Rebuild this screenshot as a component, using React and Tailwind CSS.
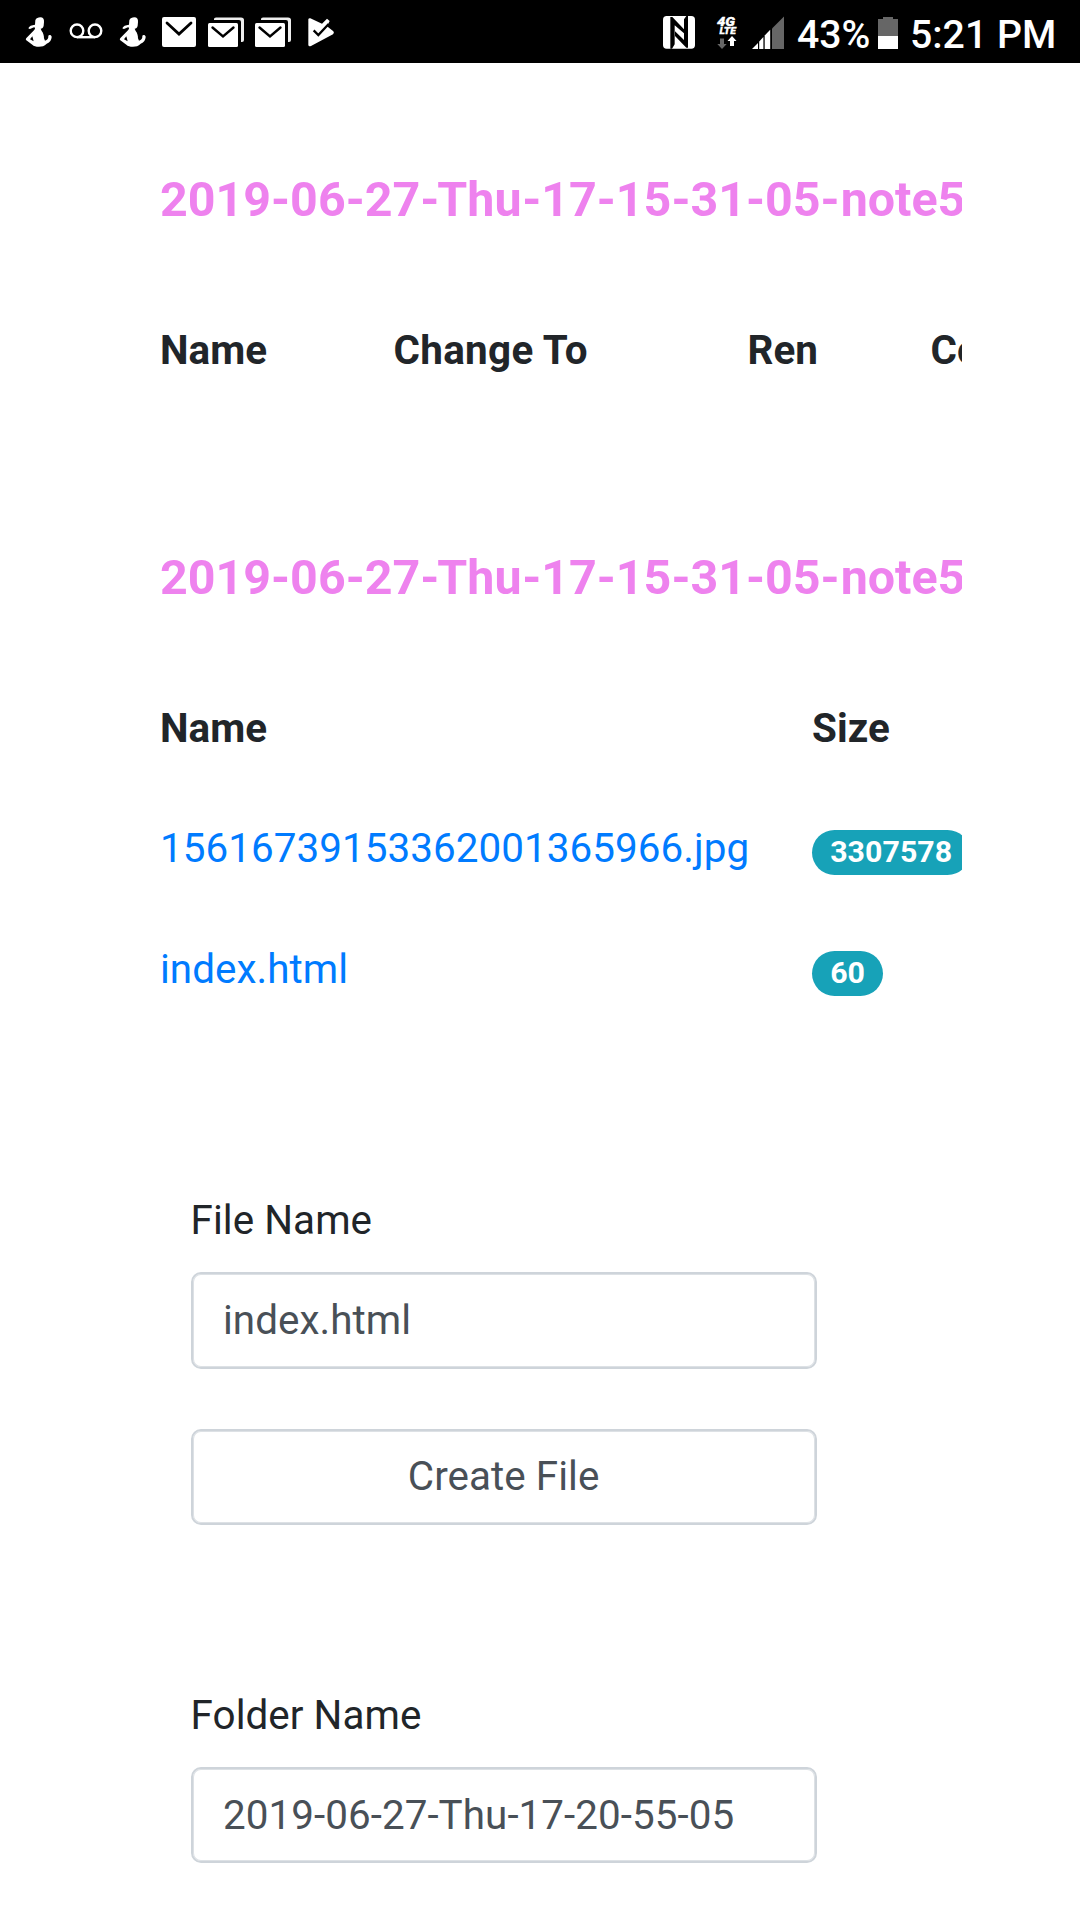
function PersonIcon() {
  return (
    <svg className="h-[30px] w-[28px]" viewBox="0 0 84 90" fill="white">
      <path d="M31 10C33 3 40 1 46 1C54 1 58 7 57 15L56 26C55 32 51 34 47 35L50 42C55 48 57 56 57 64L60 71C67 69 71 63 70 56C73 52 79 54 80 59C80 69 73 77 65 80C58 87 51 89 42 89C33 89 26 87 22 83L3 69C2 66 3 64 5 62L27 40C31 36 31 33 28 31C23 31 17 39 10 34C12 27 20 24 30 23Z" />
      <path d="M15 67L22 58L26 73Z" fill="black" />
    </svg>
  );
}

function VoicemailIcon() {
  return (
    <svg className="h-[18px] w-[34px]" viewBox="0 0 34 18" fill="none" stroke="white" strokeWidth="2.4">
      <circle cx="8" cy="7.8" r="6.3" />
      <circle cx="26" cy="7.8" r="6.3" />
      <path d="M8 14.2H26" />
    </svg>
  );
}

function MailIcon() {
  return (
    <svg className="h-[30px] w-[34px]" viewBox="0 0 34 30">
      <rect width="34" height="30" rx="2" fill="white" />
      <path d="M5 6L17 17L29 6" fill="none" stroke="black" strokeWidth="2.8" strokeLinecap="round" />
    </svg>
  );
}

function MailStackIcon() {
  return (
    <svg className="h-[30px] w-[36px]" viewBox="0 0 36 30">
      <path d="M6 3V2Q6 .5 8 .5H33Q36 .5 36 3V23Q36 25 34 25H33V5Q33 3 31 3Z" fill="#eeeeee" />
      <rect y="6" width="30" height="24" rx="1.5" fill="white" />
      <path d="M4.5 10.5L15 19.5L25.5 10.5" fill="none" stroke="black" strokeWidth="2.4" strokeLinecap="round" />
    </svg>
  );
}

function PlayCheckIcon() {
  return (
    <svg className="h-[30px] w-[28px]" viewBox="0 0 84 90">
      <path d="M4 7Q5 3 10 4L45 20L60 5L68 12L60 28L79 43Q83 48 78 52L12 87Q5 90 4 84Z" fill="white" />
      <path d="M20 40L34 54L65 21" fill="none" stroke="black" strokeWidth="7" />
    </svg>
  );
}

function NfcIcon() {
  return (
    <svg className="h-[33px] w-[32px]" viewBox="0 0 96 99">
      <rect width="96" height="98" rx="11" fill="white" />
      <path d="M22 3H28L63 40V52L35 28V85L27 98H22Z" />
      <path d="M75 95H70L36 60V46L63 72V10L70 0H75Z" />
    </svg>
  );
}

function NetworkIcon() {
  return (
    <svg className="h-[33px] w-[20px] overflow-visible" viewBox="0 0 20 33" fill="white">
      <g fontFamily="Roboto, sans-serif" fontWeight="900" fontStyle="italic" stroke="white" strokeWidth="0.3">
        <text x="0" y="9.8" fontSize="12.5" textLength="18" lengthAdjust="spacingAndGlyphs">4G</text>
        <text x="2.4" y="18.2" fontSize="9.8" textLength="16.5" lengthAdjust="spacingAndGlyphs">LTE</text>
      </g>
      <path d="M3 22.5H7V28H9.7L5 33L0.3 28H3Z" fill="#666" />
      <path d="M15 20L19.5 25H17V30H13V25H10.5Z" />
    </svg>
  );
}

function SignalIcon() {
  return (
    <svg className="h-[33px] w-[32px]" viewBox="0 0 32 33" fill="white">
      <path d="M0 33L6 27V33Z" />
      <path d="M7.2 25.5L11.4 21V33H7.2Z" />
      <path d="M12.7 19.5L18.2 13.7V33H12.7Z" />
      <path d="M20 12.5L32 0.5V33H20Z" fill="#666" />
    </svg>
  );
}

function BatteryIcon() {
  return (
    <svg className="h-[32px] w-[20px]" viewBox="0 0 20 32">
      <path d="M5 0H15V2H20V19H0V2H5Z" fill="#666" />
      <path d="M0 19H20V32H0Z" fill="white" />
    </svg>
  );
}

function StatusBar() {
  return (
    <header className="flex h-[63px] shrink-0 items-start bg-black text-[39.2px] leading-[46px] font-medium tracking-normal text-white">
      <div className="flex items-start pt-[17px] pl-[25px]">
        <PersonIcon />
        <span className="pt-[6px] pl-[16px]"><VoicemailIcon /></span>
        <span className="pl-[16px]"><PersonIcon /></span>
        <span className="pl-[15px]"><MailIcon /></span>
        <span className="pl-[12px]"><MailStackIcon /></span>
        <span className="pl-[11px]"><MailStackIcon /></span>
        <span className="pl-[16px]"><PlayCheckIcon /></span>
      </div>
      <div className="ml-auto flex w-[417px] items-start pt-[16px]">
        <NfcIcon />
        <span className="ml-[22px]"><NetworkIcon /></span>
        <span className="ml-[15px]"><SignalIcon /></span>
        <span className="-mt-[4px] ml-[13px] w-[81px] whitespace-nowrap">43%</span>
        <span className="pt-px"><BatteryIcon /></span>
        <span className="-mt-[4px] ml-[12px] whitespace-nowrap">5:21 PM</span>
      </div>
    </header>
  );
}

function Title() {
  return (
    <h2 className="h-[72px] text-[48.4px] leading-[72px] font-bold tracking-normal whitespace-nowrap text-[#ee82ee]">
      2019-06-27-<span className="-ml-[2px]">Thu</span>
      <span className="ml-[0.7px]">-17-15-31-05-</span>
      <span className="ml-[1px]">note5</span>
    </h2>
  );
}

function FileRow({ name, size }) {
  return (
    <div className="flex h-[121px] items-center">
      <a className="w-[652px] shrink-0 text-[#007bff]">{name}</a>
      <span className="mt-[7px] flex h-[45px] shrink-0 items-center rounded-full bg-[#17a2b8] px-[18.2px] text-[30.3px] leading-none font-bold text-white">
        {size}
      </span>
    </div>
  );
}

const boxClass =
  "block w-full rounded-[10px] border-2 border-[#ced4da] bg-white text-[#495057] shadow-[inset_0_0_0_1px_#dde1e5] outline-none";

export default function App() {
  return (
    <div className="flex h-[1920px] w-[1080px] flex-col overflow-hidden bg-white font-[Roboto,sans-serif] text-[40.4px] leading-[60px] tracking-[0.05px] text-[#212529]">
      <StatusBar />
      <main className="flex flex-col">
        <section className="ml-[160px] h-[378px] w-[802px] overflow-hidden pt-[101px]">
          <Title />
          <div className="mt-[85px] flex font-bold whitespace-nowrap">
            <span className="w-[233.5px] shrink-0">Name</span>
            <span className="w-[354px] shrink-0 tracking-[0.3px]">Change To</span>
            <span className="w-[183px] shrink-0">Ren</span>
            <span className="shrink-0">Copy</span>
          </div>
        </section>
        <section className="ml-[160px] h-[710px] w-[802px] overflow-hidden pt-[101px]">
          <Title />
          <div className="mt-[85px] mb-[29px] flex font-bold">
            <span className="w-[652px] shrink-0">Name</span>
            <span>Size</span>
          </div>
          <FileRow name="15616739153362001365966.jpg" size="3307578" />
          <FileRow name="index.html" size="60" />
        </section>
        <form className="ml-[190.6px] w-[626px] pt-[40px]">
          <label className="block h-[81px]">File Name</label>
          <input className={boxClass + " h-[97px] px-[30.4px]"} defaultValue="index.html" />
          <button type="button" className={boxClass + " mt-[60px] h-[96px]"}>Create File</button>
        </form>
        <form className="ml-[190.6px] w-[626px] pt-[161px]">
          <label className="block h-[81px]">Folder Name</label>
          <input className={boxClass + " h-[96px] px-[30.4px] pt-[1px]"} defaultValue="2019-06-27-Thu-17-20-55-05" />
        </form>
      </main>
    </div>
  );
}
